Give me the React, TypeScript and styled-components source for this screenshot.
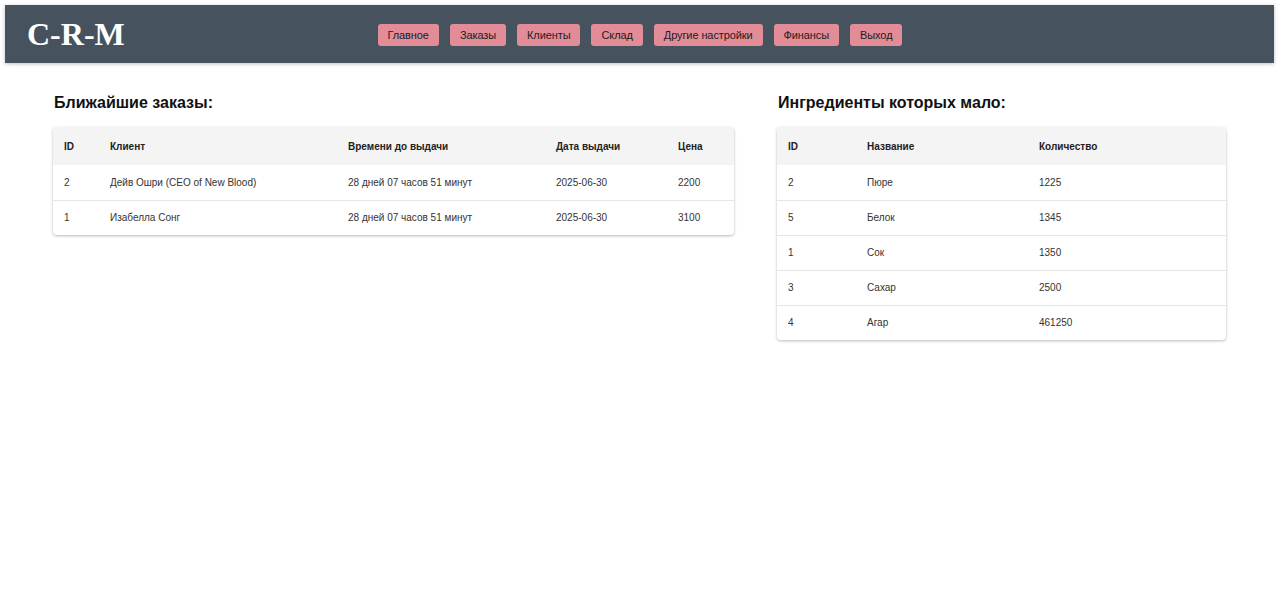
import React from "react";
import styled, { createGlobalStyle } from "styled-components";

const GlobalStyle = createGlobalStyle`
  html, body {
    margin: 0;
    padding: 0;
    background: #fff;
    font-family: "Liberation Sans", Arial, sans-serif;
  }
`;

const Header = styled.header`
  margin: 5px 6px 0 5px;
  height: 58px;
  background: #47525f;
  box-shadow: 0 1px 4px rgba(0, 0, 0, 0.25);
  display: grid;
  grid-template-columns: 1fr auto 1fr;
  align-items: center;
  padding: 0 22px;
`;

const Logo = styled.div`
  font-family: "Liberation Serif", "Times New Roman", serif;
  font-weight: 700;
  font-size: 32px;
  color: #fff;
`;

const Nav = styled.nav`
  display: flex;
  gap: 11px;
  margin: 1px 0 0 1px;
`;

const NavButton = styled.button`
  height: 22px;
  padding: 0 10px;
  border: none;
  border-radius: 3px;
  background: #e28c98;
  color: #1c1c1c;
  font-family: "Liberation Sans", Arial, sans-serif;
  font-size: 11px;
  letter-spacing: -0.1px;
  cursor: pointer;
`;

const Main = styled.main`
  display: grid;
  grid-template-columns: 681fr 449fr;
  column-gap: 43px;
  align-items: start;
  padding: 30px 54px 10px 53px;
`;

const Section = styled.section`
  display: flex;
  flex-direction: column;
`;

const Title = styled.h2`
  margin: 0 0 15px 1px;
  font-size: 16px;
  line-height: 19px;
  font-weight: 700;
  color: #111;
`;

const Card = styled.div`
  border-radius: 4px;
  background: #fff;
  box-shadow: 0 1px 3px rgba(0, 0, 0, 0.28);
  overflow: hidden;
`;

const Table = styled.table`
  width: 100%;
  border-collapse: collapse;
  table-layout: fixed;
  font-size: 10px;
`;

const HeadCell = styled.th<{ $w?: number }>`
  box-sizing: border-box;
  background: #f4f4f4;
  height: 38px;
  padding: 0 11px;
  text-align: left;
  font-weight: 700;
  color: #222;
  width: ${(p) => (p.$w ? `${p.$w}px` : "auto")};
`;

const Row = styled.tr`
  & + & td {
    border-top: 1px solid #e6e6e6;
  }
`;

const Cell = styled.td`
  height: 35px;
  padding: 0 11px;
  color: #333;
  box-sizing: border-box;
  white-space: nowrap;
`;

const orders = [
  { id: 2, client: "Дейв Ошри (CEO of New Blood)", left: "28 дней 07 часов 51 минут", date: "2025-06-30", price: 2200 },
  { id: 1, client: "Изабелла Сонг", left: "28 дней 07 часов 51 минут", date: "2025-06-30", price: 3100 },
];

const ingredients = [
  { id: 2, name: "Пюре", qty: 1225 },
  { id: 5, name: "Белок", qty: 1345 },
  { id: 1, name: "Сок", qty: 1350 },
  { id: 3, name: "Сахар", qty: 2500 },
  { id: 4, name: "Агар", qty: 461250 },
];

const menu = ["Главное", "Заказы", "Клиенты", "Склад", "Другие настройки", "Финансы", "Выход"];

export default function App() {
  return (
    <>
      <GlobalStyle />
      <Header>
        <Logo>C-R-M</Logo>
        <Nav>
          {menu.map((m) => (
            <NavButton key={m}>{m}</NavButton>
          ))}
        </Nav>
        <div />
      </Header>
      <Main>
        <Section>
          <Title>Ближайшие заказы:</Title>
          <Card>
            <Table>
              <thead>
                <tr>
                  <HeadCell $w={46}>ID</HeadCell>
                  <HeadCell $w={238}>Клиент</HeadCell>
                  <HeadCell $w={208}>Времени до выдачи</HeadCell>
                  <HeadCell $w={122}>Дата выдачи</HeadCell>
                  <HeadCell>Цена</HeadCell>
                </tr>
              </thead>
              <tbody>
                {orders.map((o) => (
                  <Row key={o.id}>
                    <Cell>{o.id}</Cell>
                    <Cell>{o.client}</Cell>
                    <Cell>{o.left}</Cell>
                    <Cell>{o.date}</Cell>
                    <Cell>{o.price}</Cell>
                  </Row>
                ))}
              </tbody>
            </Table>
          </Card>
        </Section>
        <Section>
          <Title>Ингредиенты которых мало:</Title>
          <Card>
            <Table>
              <thead>
                <tr>
                  <HeadCell $w={79}>ID</HeadCell>
                  <HeadCell $w={172}>Название</HeadCell>
                  <HeadCell>Количество</HeadCell>
                </tr>
              </thead>
              <tbody>
                {ingredients.map((i) => (
                  <Row key={i.id}>
                    <Cell>{i.id}</Cell>
                    <Cell>{i.name}</Cell>
                    <Cell>{i.qty}</Cell>
                  </Row>
                ))}
              </tbody>
            </Table>
          </Card>
        </Section>
      </Main>
    </>
  );
}
